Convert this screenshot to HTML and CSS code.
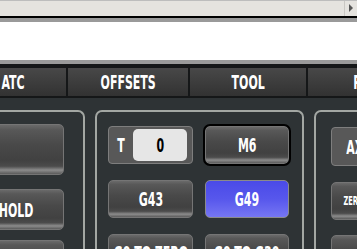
FILE: index.html
```html
<!doctype html>
<html lang="en">
<head>
    <meta charset="UTF-8">
    <title>Tool</title>
    <link rel="stylesheet" href="styles.css">
</head>
<body>
<div class="topbar">
    <span class="arrow"></span>
</div>
<div class="rule-dark"></div>
<div class="rule"></div>
<div class="blank"></div>
<div class="rule"></div>
<div class="tabs">
    <div class="tab tab-atc"><span class="txt">ATC</span></div>
    <div class="tab tab-offsets"><span class="txt">OFFSETS</span></div>
    <div class="tab tab-tool"><span class="txt">TOOL</span></div>
    <div class="tab tab-probe"><span class="txt">PROBE</span></div>
</div>
<div class="main">
    <div class="panel panel-left">
        <div class="btn btn-tall"></div>
        <div class="btn btn-hold"><span class="txt">FEED HOLD</span></div>
        <div class="btn btn-hold"></div>
    </div>
    <div class="panel panel-mid">
        <div class="field">
            <span class="field-label txt">T</span>
            <span class="field-value"><span class="txt">0</span></span>
        </div>
        <div class="btn btn-active"><span class="txt">M6</span></div>
        <div class="btn"><span class="txt">G43</span></div>
        <div class="btn btn-blue"><span class="txt">G49</span></div>
        <div class="btn"><span class="txt">G0 TO ZERO</span></div>
        <div class="btn"><span class="txt">G0 TO G30</span></div>
    </div>
    <div class="panel panel-right">
        <div class="field field-axis"><span class="txt">AXIS</span></div>
        <div class="btn"><span class="txt small">ZERO ALL</span></div>
        <div class="btn"></div>
    </div>
</div>
</body>
</html>
```

FILE: styles.css
```css
* {
    margin: 0;
    padding: 0;
    box-sizing: border-box;
}

body {
    width: 357px;
    height: 249px;
    overflow: hidden;
    background: #2e3335;
    font-family: "DejaVu Sans Condensed", "Liberation Sans", sans-serif;
}

.topbar {
    height: 16px;
    border-top: 1px solid #bdbdbd;
    background: #e5e3df;
    position: relative;
}

.arrow {
    position: absolute;
    left: 344px;
    top: 0;
    width: 13px;
    height: 15px;
    border-left: 1px solid #c9c7c3;
}

.arrow::after {
    content: "";
    position: absolute;
    left: 4px;
    top: 3px;
    border-left: 4px solid #555;
    border-top: 4px solid transparent;
    border-bottom: 4px solid transparent;
}

.rule-dark {
    height: 2px;
    background: #000;
}

.rule {
    height: 4px;
    background: #9a9a9a;
}

.blank {
    height: 38px;
    background: #fff;
}

.tabs {
    display: flex;
    gap: 2px;
    margin-left: -40px;
    padding: 4px 0 2px;
    background: #151718;
}

.tab {
    height: 28px;
    flex: none;
    display: flex;
    align-items: center;
    justify-content: center;
    background: linear-gradient(#484848, #323232);
    color: #fff;
}

.tab-atc { width: 106px; }
.tab-offsets { width: 120px; }
.tab-tool { width: 116px; }
.tab-probe { width: 132px; }

.txt {
    display: inline-block;
    font-weight: bold;
    font-size: 20px;
    line-height: 20px;
    transform: scaleX(0.61);
    white-space: nowrap;
}

.txt.small {
    font-size: 12px;
}

.main {
    display: flex;
    gap: 10px;
    margin-left: -75px;
    padding-top: 12px;
}

.panel {
    flex: none;
    height: 200px;
    border: 2px solid #a3a7a3;
    border-bottom: none;
    border-radius: 7px 7px 0 0;
}

.panel-left {
    width: 160px;
    padding: 12px 19px 0 5px;
}

.panel-mid {
    width: 209px;
    padding: 14px 13px 0 11px;
    display: grid;
    grid-template-columns: 85px 84px;
    grid-auto-rows: 38px;
    column-gap: 12px;
    row-gap: 16px;
}

.panel-right {
    width: 120px;
    padding: 15px 0 0 15px;
}

.btn {
    display: flex;
    align-items: center;
    justify-content: center;
    color: #fff;
    border: 1px solid #757575;
    border-radius: 5px;
    background: linear-gradient(#6a6a6a 0, #585858 10%, #494949 40%, #414141 72%, #4b4b4b 84%, #8c8c8c 92%, #5b5b5b 100%);
}

.panel-left .btn {
    width: 132px;
}

.btn-tall {
    height: 51px;
    margin-bottom: 14px;
}

.btn-hold {
    height: 41px;
    margin-bottom: 10px;
}

.btn-active {
    outline: 2px solid #000;
}

.btn-blue {
    border-color: #8a8a8a;
    background: linear-gradient(#4a4ae8, #5757ec 50%, #7676f3);
}

.panel-right .btn {
    width: 60px;
    height: 38px;
    margin-bottom: 15px;
}

.field {
    display: flex;
    align-items: center;
    border: 1px solid #7e7e7e;
    border-radius: 4px;
    background: #585858;
    color: #fff;
    padding: 2px 5px 2px 0;
}

.field-label {
    width: 24px;
    text-align: center;
}

.field-value {
    flex: 1;
    height: 32px;
    display: flex;
    align-items: center;
    justify-content: center;
    border-radius: 5px;
    background: #e6e6e6;
    color: #000;
}

.field-axis {
    width: 60px;
    height: 39px;
    margin-bottom: 16px;
    padding: 0;
    justify-content: center;
}
```
